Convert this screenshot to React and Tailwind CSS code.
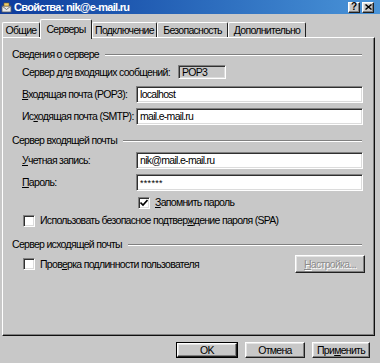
import React from 'react';

const sunken = 'border border-t-[#808080] border-l-[#808080] border-b-white border-r-white shadow-[inset_1px_1px_0_#303030,inset_-1px_-1px_0_#dcdcdc]';
const raised = 'border border-t-white border-l-white border-b-[#202020] border-r-[#202020] shadow-[inset_-1px_-1px_0_#808080,inset_1px_1px_0_#e4e4e4]';

function Header({ children }) {
  return (
    <div className="flex items-center h-[13px] pl-[9px] pr-[12px]">
      <span className="whitespace-nowrap">{children}</span>
      <div className="flex-1 ml-[6px] border-t border-t-[#808080] border-b border-b-white" />
    </div>
  );
}

function Field({ label, value, className = '' }) {
  return (
    <div className={`flex items-center h-[17px] pl-[19px] pr-[11px] ${className}`}>
      <span className="w-[114px] whitespace-nowrap">{label}</span>
      <div className={`flex-1 h-full bg-white flex items-center pl-[3px] ${sunken}`}>
        <span className="whitespace-nowrap">{value}</span>
      </div>
    </div>
  );
}

function Box({ checked }) {
  return (
    <div className={`w-[12px] h-[12px] bg-white shrink-0 flex items-center justify-center ${sunken}`}>
      {checked && (
        <svg width="8" height="8" viewBox="0 0 8 8">
          <path d="M0.5 3.5 L3 6 L7.5 1" stroke="#000" strokeWidth="1.6" fill="none" />
        </svg>
      )}
    </div>
  );
}

function Tab({ label, w, active }) {
  if (active) {
    return (
      <div className={`relative z-10 ${w} h-[20px] -mb-[2px] bg-[#c8c8c8] border-t border-l border-t-white border-l-white border-r border-r-[#202020] rounded-t-[2px] flex items-start justify-center pt-[3px]`}>
        {label}
      </div>
    );
  }
  return (
    <div className={`${w} h-[15px] bg-[#c8c8c8] border-t border-l border-t-white border-l-white border-r border-r-[#202020] rounded-t-[2px] flex items-center justify-center`}>
      {label}
    </div>
  );
}

function Button({ children, def, w }) {
  return (
    <div className={`${w} h-[16px] ${def ? 'border border-black' : ''} flex`}>
      <div className={`flex-1 flex items-center justify-center ${raised}`}>
        {children}
      </div>
    </div>
  );
}

export default function App() {
  return (
    <div className="w-[380px] h-[363px] overflow-hidden bg-[#c8c8c8] font-['Liberation_Sans',Arial,sans-serif] text-[10.5px] tracking-[-0.7px] leading-[13px] text-black flex flex-col">
      {/* заголовок */}
      <div className="h-[14px] shrink-0 flex items-center bg-gradient-to-r from-[#0e3a9c] to-[#4a94d8] pl-[1px] pr-[6px]">
        <svg width="11" height="11" viewBox="0 0 11 11" className="shrink-0">
          <rect x="1" y="4" width="9" height="6" fill="#e8e8e8" stroke="#606060" strokeWidth="0.8" />
          <path d="M1 4 L5.5 7.5 L10 4" stroke="#606060" strokeWidth="0.8" fill="none" />
          <rect x="3" y="1" width="5" height="3" fill="#f0d070" stroke="#806020" strokeWidth="0.6" />
        </svg>
        <span className="ml-[2px] text-white font-bold text-[11px] tracking-[-0.7px] whitespace-nowrap">Свойства: nik@e-mail.ru</span>
        <div className="flex-1" />
        <div className={`w-[12px] h-[11px] bg-[#c8c8c8] flex items-center justify-center font-bold text-[10px] leading-none tracking-normal ${raised}`}>?</div>
        <div className={`ml-[2px] w-[12px] h-[11px] bg-[#c8c8c8] flex items-center justify-center ${raised}`}>
          <svg width="7" height="6" viewBox="0 0 7 6">
            <path d="M0.5 0.5 L6.5 5.5 M6.5 0.5 L0.5 5.5" stroke="#000" strokeWidth="1.4" />
          </svg>
        </div>
      </div>

      {/* вкладки */}
      <div className="mt-[5px] h-[18px] shrink-0 flex items-end pl-[2px]">
        <Tab label="Общие" w="w-[38px]" />
        <Tab label="Серверы" w="w-[52px]" active />
        <Tab label="Подключение" w="w-[65px]" />
        <Tab label="Безопасность" w="w-[71px]" />
        <Tab label="Дополнительно" w="w-[78px]" />
      </div>

      {/* панель */}
      <div className="ml-[2px] mr-[5px] h-[299px] shrink-0 border border-t-white border-l-white border-b-[#101010] border-r-[#101010] shadow-[inset_-1px_-1px_0_#808080] flex flex-col">
        <div className="mt-[10px]">
          <Header>Сведения о сервере</Header>
        </div>
        <div className="mt-[4px] flex items-center h-[14px] pl-[19px]">
          <span className="whitespace-nowrap">Сервер дл<u>я</u> входящих сообщений:</span>
          <div className={`ml-[8px] w-[48px] h-[14px] flex items-center pl-[3px] ${sunken}`}>POP3</div>
        </div>
        <Field className="mt-[7px]" label={<><u>В</u>ходящая почта (POP3):</>} value="localhost" />
        <Field className="mt-[5px]" label={<>Ис<u>х</u>одящая почта (SMTP):</>} value="mail.e-mail.ru" />

        <div className="mt-[9px]">
          <Header>Сервер входящей почты</Header>
        </div>
        <Field className="mt-[5px]" label={<><u>У</u>четная запись:</>} value="nik@mail.e-mail.ru" />
        <Field className="mt-[5px]" label={<><u>П</u>ароль:</>} value={<span className="text-[9px] tracking-[0.3px]">******</span>} />
        <div className="mt-[5px] h-[13px] flex items-center pl-[135px]">
          <Box checked />
          <span className="ml-[5px]"><u>З</u>апомнить пароль</span>
        </div>
        <div className="mt-[5px] h-[13px] flex items-center pl-[20px]">
          <Box />
          <span className="ml-[5px] whitespace-nowrap">Использовать безопасное подтвер<u>ж</u>дение пароля (SPA)</span>
        </div>

        <div className="mt-[11px]">
          <Header>Сервер исходящей почты</Header>
        </div>
        <div className="mt-[4px] h-[18px] flex items-center pl-[20px] pr-[9px]">
          <Box />
          <span className="ml-[5px] whitespace-nowrap">Пров<u>е</u>рка подлинности пользователя</span>
          <div className="flex-1" />
          <div className="w-[70px] h-[18px] flex">
            <div className={`flex-1 flex items-center justify-center text-[#8c8c8c] [text-shadow:1px_1px_0_#fff] ${raised}`}>
              <span><u>Н</u>астройка...</span>
            </div>
          </div>
        </div>
      </div>

      {/* кнопки */}
      <div className="mt-[6px] flex justify-end gap-[7px] pr-[10px]">
        <Button def w="w-[62px]">OK</Button>
        <Button w="w-[60px]">Отмена</Button>
        <Button w="w-[58px]">При<u>м</u>енить</Button>
      </div>
    </div>
  );
}
